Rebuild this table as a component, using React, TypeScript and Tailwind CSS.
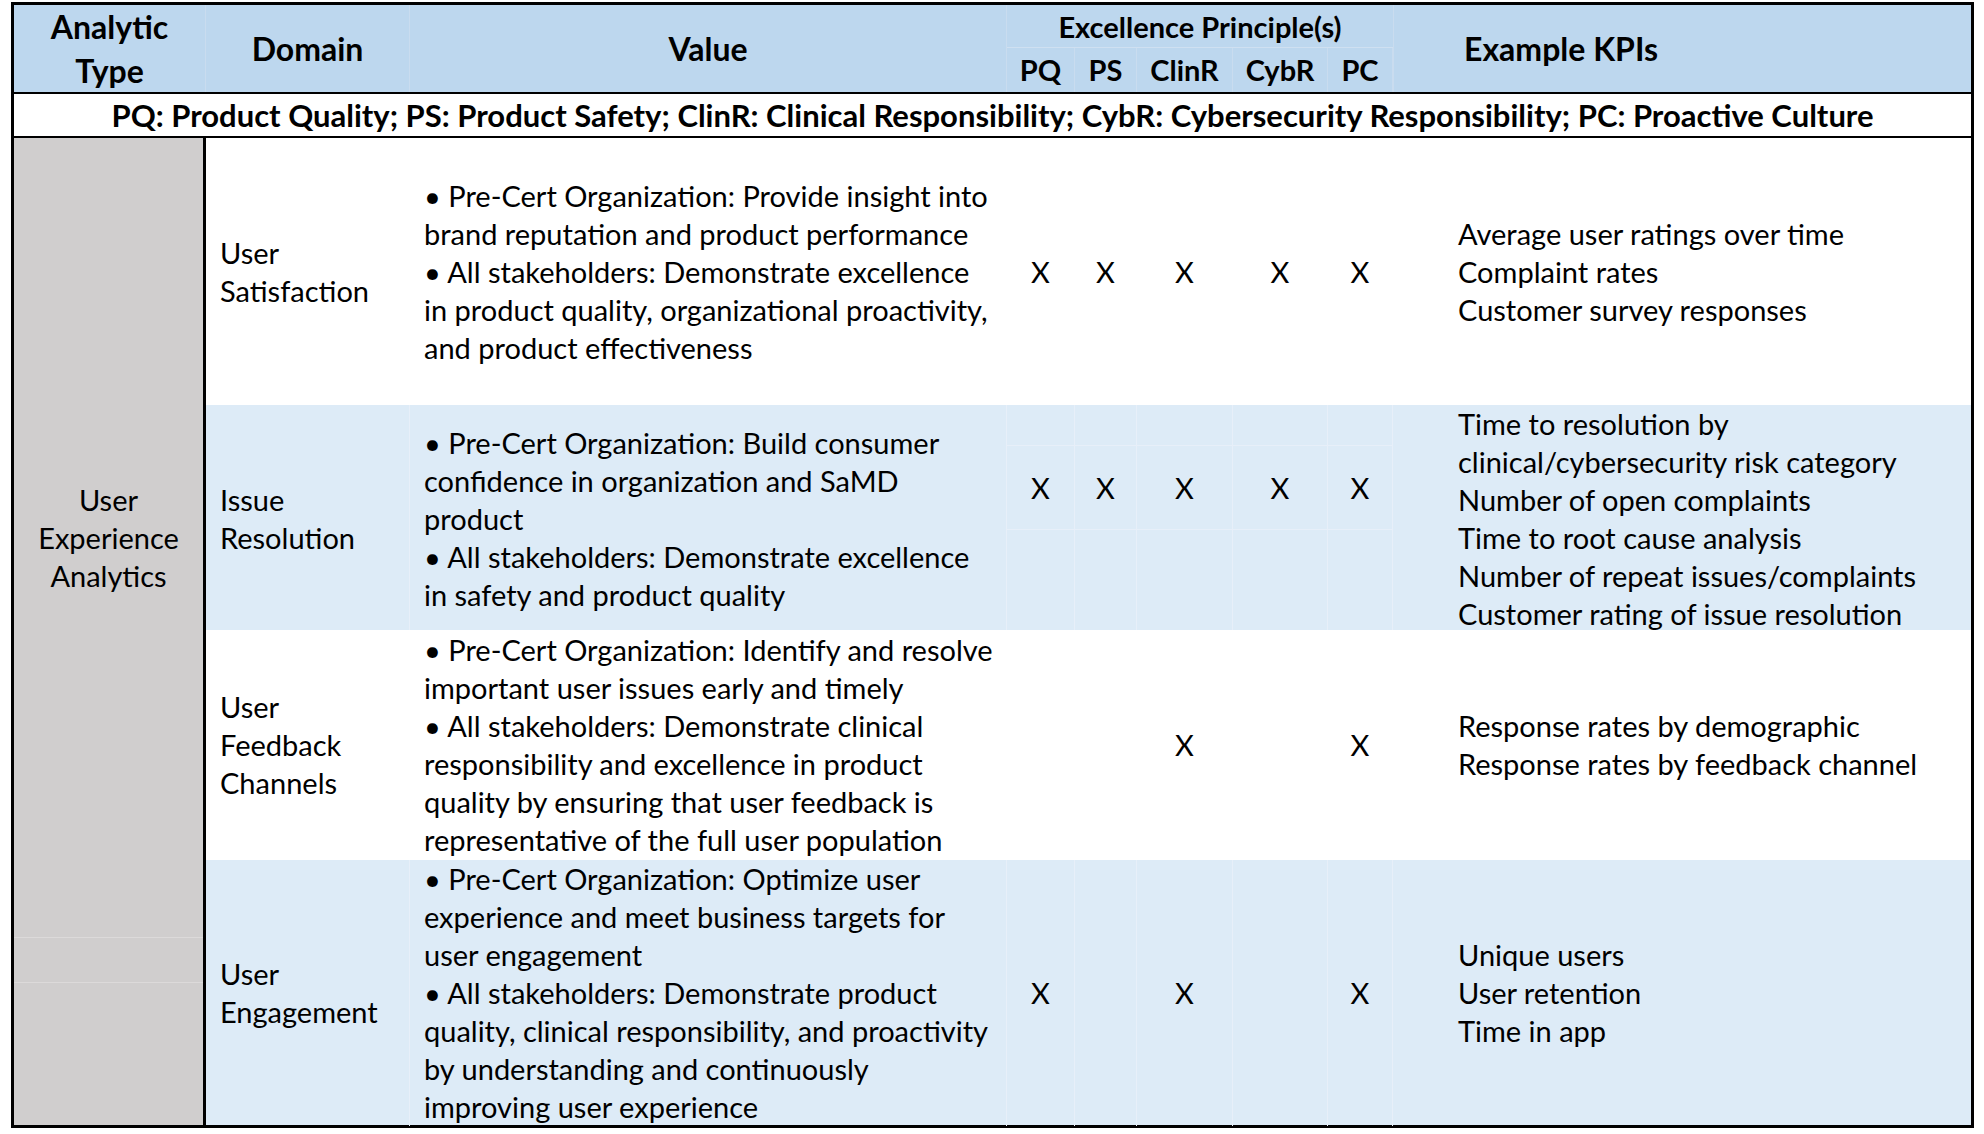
import React from 'react';

type Row = {
  bg: string;
  grid: string;
  h: string;
  domain: string[];
  value: string[];
  marks: boolean[];
  kpis: string[];
  split: boolean;
};

const rows: Row[] = [
  {
    bg: 'bg-white',
    grid: 'border-white',
    h: 'h-[267px]',
    domain: ['User', 'Satisfaction'],
    value: [
      '• Pre-Cert Organization: Provide insight into',
      'brand reputation and product performance',
      '• All stakeholders: Demonstrate excellence',
      'in product quality, organizational proactivity,',
      'and product effectiveness',
    ],
    marks: [true, true, true, true, true],
    kpis: ['Average user ratings over time', 'Complaint rates', 'Customer survey responses'],
    split: false,
  },
  {
    bg: 'bg-[#ddebf7]',
    grid: 'border-[#e7eff9]',
    h: 'h-[225px]',
    domain: ['Issue', 'Resolution'],
    value: [
      '• Pre-Cert Organization: Build consumer',
      'confidence in organization and SaMD',
      'product',
      '• All stakeholders: Demonstrate excellence',
      'in safety and product quality',
    ],
    marks: [true, true, true, true, true],
    kpis: [
      'Time to resolution by',
      'clinical/cybersecurity risk category',
      'Number of open complaints',
      'Time to root cause analysis',
      'Number of repeat issues/complaints',
      'Customer rating of issue resolution',
    ],
    split: true,
  },
  {
    bg: 'bg-white',
    grid: 'border-white',
    h: 'h-[230px]',
    domain: ['User', 'Feedback', 'Channels'],
    value: [
      '• Pre-Cert Organization: Identify and resolve',
      'important user issues early and timely',
      '• All stakeholders: Demonstrate clinical',
      'responsibility and excellence in product',
      'quality by ensuring that user feedback is',
      'representative of the full user population',
    ],
    marks: [false, false, true, false, true],
    kpis: ['Response rates by demographic', 'Response rates by feedback channel'],
    split: false,
  },
  {
    bg: 'bg-[#ddebf7]',
    grid: 'border-[#e7eff9]',
    h: 'h-[265px]',
    domain: ['User', 'Engagement'],
    value: [
      '• Pre-Cert Organization: Optimize user',
      'experience and meet business targets for',
      'user engagement',
      '• All stakeholders: Demonstrate product',
      'quality, clinical responsibility, and proactivity',
      'by understanding and continuously',
      'improving user experience',
    ],
    marks: [true, false, true, false, true],
    kpis: ['Unique users', 'User retention', 'Time in app'],
    split: false,
  },
];

const principles = [
  { label: 'PQ', col: 'col-start-4' },
  { label: 'PS', col: 'col-start-5' },
  { label: 'ClinR', col: 'col-start-6' },
  { label: 'CybR', col: 'col-start-7' },
  { label: 'PC', col: 'col-start-8' },
];

function Lines({ lines }: { lines: string[] }) {
  return (
    <div>
      {lines.map((l, i) => (
        <div key={i} className="whitespace-nowrap">
          {l}
        </div>
      ))}
    </div>
  );
}

function Mark({ on, split, grid }: { on: boolean; split: boolean; grid: string }) {
  if (!split) {
    return <div className={`flex items-center justify-center border-r ${grid}`}>{on ? 'X' : ''}</div>;
  }
  // cells in this row are stacked in three sheet rows; the X sits in the middle one
  return (
    <div className={`flex flex-col border-r ${grid}`}>
      <div className={`h-[41px] border-b ${grid}`} />
      <div className={`h-[84px] flex items-center justify-center border-b ${grid}`}>{on ? 'X' : ''}</div>
      <div className="flex-1" />
    </div>
  );
}

export default function App() {
  return (
    <div className="w-[1984px] h-[1134px] overflow-hidden bg-white pt-[2px] pl-[11px] font-[Lato,'Liberation_Sans',sans-serif] text-[29px] leading-[38px] text-black">
      <div className="w-[1963px] border-[3px] border-black">
        {/* header */}
        <div className="grid grid-cols-[192px_204px_597px_68px_62px_96px_95px_65px_578px] grid-rows-[43px_44px] h-[89px] bg-[#bdd7ee] font-bold border-b-2 border-black">
          <div className="col-start-1 row-start-1 row-span-2 flex flex-col items-center justify-center text-[32px] leading-[44px] border-r border-[#c9dcef]">
            <div>Analytic</div>
            <div>Type</div>
          </div>
          <div className="col-start-2 row-start-1 row-span-2 flex items-center justify-center text-[32px] border-r border-[#c9dcef]">
            Domain
          </div>
          <div className="col-start-3 row-start-1 row-span-2 flex items-center justify-center text-[32px] border-r border-[#c9dcef]">
            Value
          </div>
          <div className="col-start-4 col-span-5 row-start-1 flex items-center justify-center border-b border-[#cfe0f1] pt-[2px]">
            Excellence Principle(s)
          </div>
          <div className="col-start-9 row-start-1 row-span-2 flex items-center pl-[70px] text-[32px] border-l border-[#c9dcef]">
            Example KPIs
          </div>
          {principles.map((p) => (
            <div
              key={p.label}
              className={`${p.col} row-start-2 flex items-center justify-center border-r border-[#c9dcef]`}
            >
              {p.label}
            </div>
          ))}
        </div>

        {/* legend */}
        <div className="h-[44px] flex items-center justify-center font-bold text-[31px] border-b-2 border-black whitespace-nowrap">
          PQ: Product Quality; PS: Product Safety; ClinR: Clinical Responsibility; CybR: Cybersecurity
          Responsibility; PC: Proactive Culture
        </div>

        {/* body */}
        <div className="flex">
          <div className="w-[192px] shrink-0 bg-[#d0cece] border-r-[3px] border-black flex flex-col">
            <div className="h-[800px] flex flex-col items-center justify-center text-center border-b border-[#dcdada]">
              <div>User</div>
              <div>Experience</div>
              <div>Analytics</div>
            </div>
            <div className="h-[45px] border-b border-[#dcdada]" />
            <div className="flex-1" />
          </div>

          <div className="flex flex-col">
            {rows.map((r, i) => (
              <div
                key={i}
                className={`grid grid-cols-[204px_597px_68px_62px_96px_95px_65px_578px] ${r.h} ${r.bg}`}
              >
                <div className={`flex items-center pl-[14px] border-r ${r.grid}`}>
                  <Lines lines={r.domain} />
                </div>
                <div className={`flex items-center pl-[14px] border-r ${r.grid}`}>
                  <Lines lines={r.value} />
                </div>
                {r.marks.map((m, j) => (
                  <Mark key={j} on={m} split={r.split} grid={r.grid} />
                ))}
                <div className="flex items-center pl-[65px]">
                  <Lines lines={r.kpis} />
                </div>
              </div>
            ))}
          </div>
        </div>
      </div>
    </div>
  );
}
